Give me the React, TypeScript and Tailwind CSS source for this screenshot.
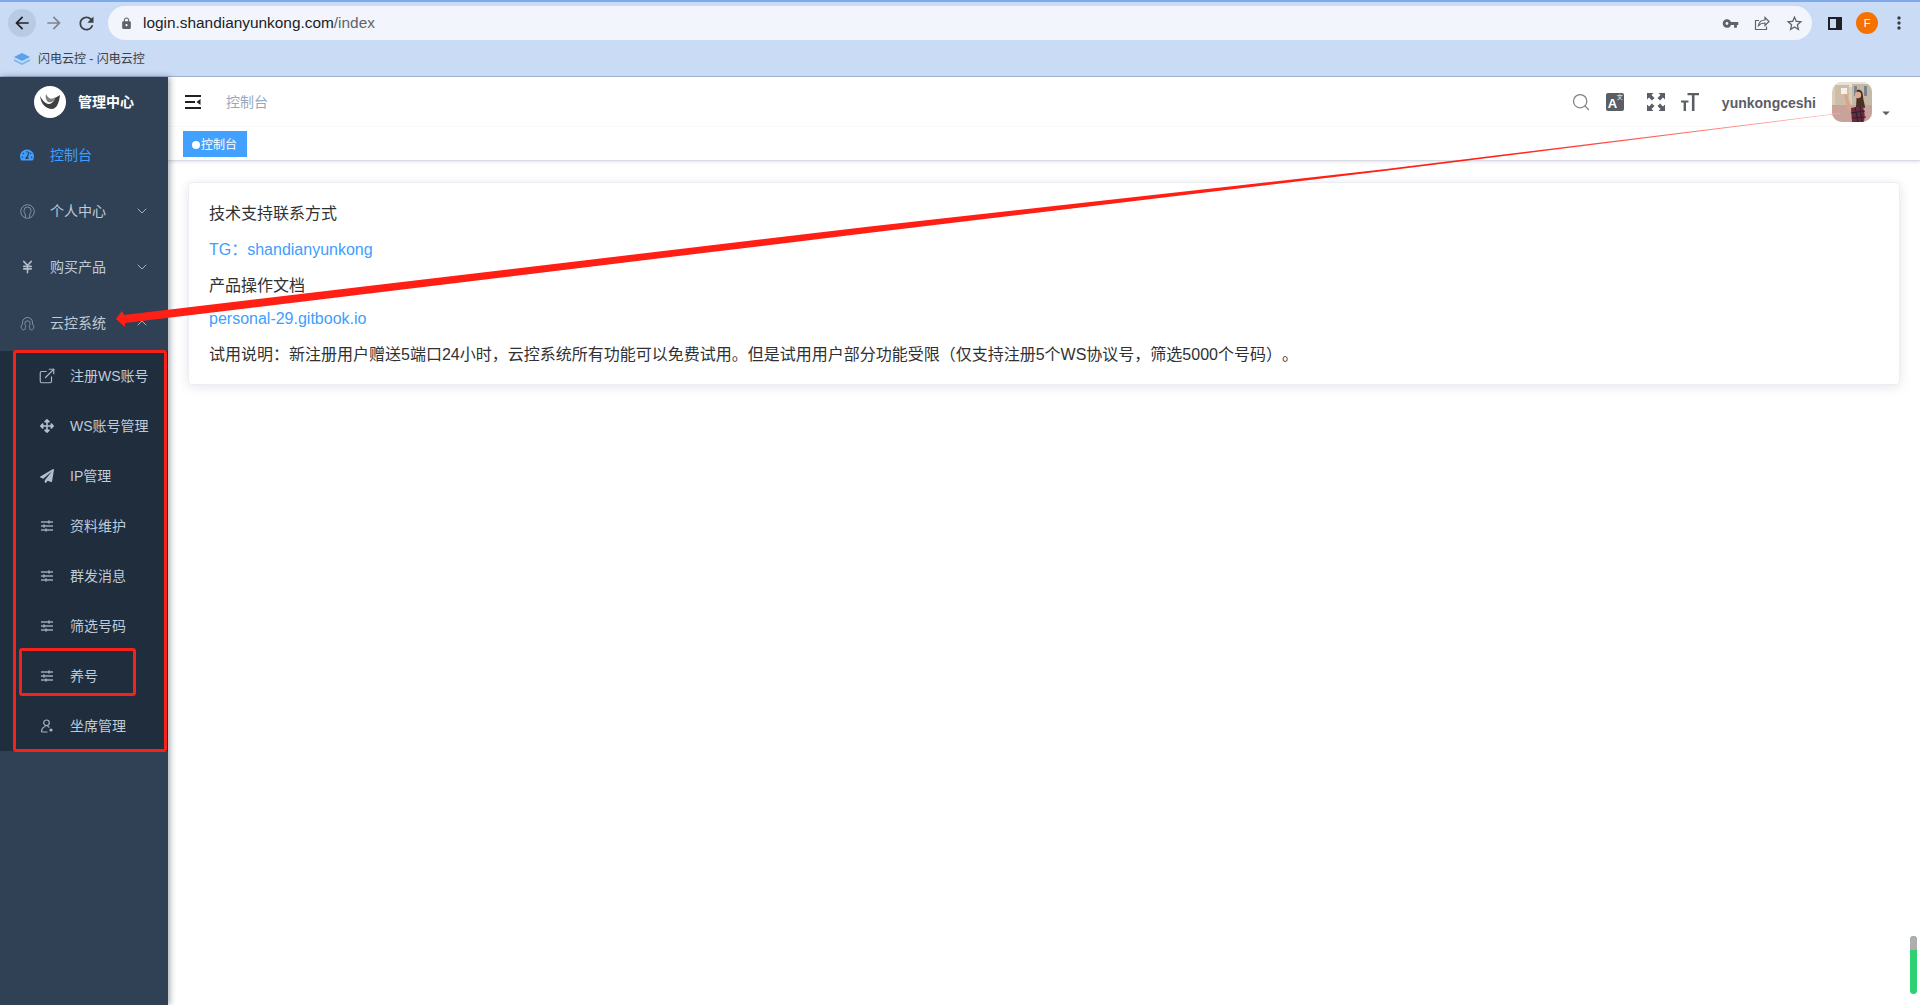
import React from "react";
import { ChevronDown, ChevronUp, ExternalLink, JapaneseYen, Search } from "lucide-react";
import { FaTachometerAlt, FaPaperPlane, FaArrowsAlt } from "react-icons/fa";
import { MdArrowBack, MdArrowForward, MdRefresh, MdLock, MdVpnKey, MdStarBorder, MdMoreVert, MdArrowDropDown } from "react-icons/md";

function Sliders() {
  return (
    <svg width="14" height="12" viewBox="0 0 14 12" fill="none" stroke="#9aa6b6" strokeWidth="1.300">
      <path d="M1 2h12M1 6h12M1 10h12" />
      <path d="M9 0.500v3M4 4.500v3M6 8.500v3" strokeWidth="1.800" />
    </svg>
  );
}

function PersonCircle() {
  return (
    <svg width="15" height="15" viewBox="0 0 15 15" fill="none" stroke="#8f9bab" strokeWidth="0.900">
      <circle cx="7.500" cy="7.500" r="6.800" />
      <path d="M5.300 13.500V10c-1-1-1.300-2-1.300-3.500a3.500 3.500 0 0 1 7 0c0 1.500-.3 2.500-1.300 3.500v3.500" />
    </svg>
  );
}

function Headset() {
  return (
    <svg width="15" height="15" viewBox="0 0 15 15" fill="none" stroke="#8f9bab" strokeWidth="0.900">
      <path d="M2.500 8.500V6.500a5 5 0 0 1 10 0v2" />
      <path d="M4.800 7.500a2.700 2.700 0 0 1 5.400 0c0 1-.5 1.800-1 2.300M4.800 7.500c0 1 .5 1.800 1 2.300" />
      <path d="M2.500 8.500C1 9 .8 11 1.500 12.500c.5 1 1.500 1.500 2.500 1.500M12.500 8.500c1.500.5 1.700 2.500 1 4-.5 1-1.500 1.500-2.500 1.500M5 14c0-2 .3-3 1-4M10 14c0-2-.3-3-1-4" />
    </svg>
  );
}

function SeatIcon() {
  return (
    <svg width="14" height="14" viewBox="0 0 14 14" fill="none" stroke="#aab4c2" strokeWidth="1.200">
      <circle cx="6.500" cy="3.800" r="2.800" />
      <path d="M1.500 13c0-3 1.500-5 4-5.500M7.500 7.500c.8.100 1.400.5 1.900 1M1.500 13h6" />
      <circle cx="11" cy="11" r="1.600" fill="#aab4c2" stroke="none" />
    </svg>
  );
}

function ShareBox() {
  return (
    <svg width="16" height="16" viewBox="0 0 16 16" fill="none" stroke="#5f6368" strokeWidth="1.200">
      <path d="M5 5.500H1.500v9h11v-3" />
      <path d="M4.500 10.500c.5-3.500 3-5.500 6.500-5.500V2.500l4 4-4 4V8c-3 0-5 .8-6.500 2.500z" />
    </svg>
  );
}

function Fullscreen() {
  return (
    <svg width="18" height="18" viewBox="0 0 18 18" fill="#5a5e66">
      <path d="M0 0h6.500L4.500 2 7.500 5 5 7.500 2 4.500 0 6.500zM18 0v6.500l-2-2-3 3L10.500 5l3-3-2-2zM0 18v-6.500l2 2 3-3L7.500 13l-3 3 2 2zM18 18h-6.500l2-2-3-3 2.500-2.500 3 3 2-2z" />
    </svg>
  );
}

function TextSize() {
  return (
    <svg width="18" height="18" viewBox="0 0 18 18" fill="#5a5e66">
      <path d="M6.500 0H18v2.200h-4.500V18h-2.600V2.200H6.500zM0 7.500h7.500v2H5V18H2.600V9.500H0z" />
    </svg>
  );
}

function Logo() {
  return (
    <div className="h-8 w-8 rounded-full bg-white">
      <svg width="32" height="32" viewBox="0 0 32 32">
        <path d="M6 10c1 8 6 13 12 13 4 0 7-5 8-14l-5 3c-1 4-4 6-7 6-3-1-6-4-8-8z" fill="#3f3f3f" />
        <path d="M12 8c2 4 5 6 8 4l2-1c-2 5-6 6-8 5-2-2-3-5-2-8z" fill="#808080" />
      </svg>
    </div>
  );
}

function Avatar() {
  return (
    <svg width="40" height="40" viewBox="0 0 40 40" className="rounded-[10px]">
      <rect width="40" height="40" fill="#d9cdb9" />
      <rect x="0" y="0" width="40" height="5" fill="#e8e2d6" />
      <rect x="3" y="3" width="14" height="21" fill="#cdbda6" />
      <rect x="20" y="2" width="20" height="22" fill="#c4b9a8" />
      <rect x="22" y="4" width="3" height="10" fill="#7d8489" />
      <rect x="32" y="4" width="3" height="10" fill="#7d8489" />
      <rect x="0" y="23" width="40" height="17" fill="#c9a29a" />
      <rect x="9" y="6" width="6" height="6" fill="#f1f1ee" />
      <path d="M12 12l3 0 5 15-4 2z" fill="#d8a48e" />
      <path d="M25 8c4-1 6 2 6 6 0 4 2 8 2 12l-9-1z" fill="#4a2f22" />
      <circle cx="26" cy="13" r="3.200" fill="#dcab92" />
      <path d="M19 26l11-2c3 4 3 10 2 16H20z" fill="#6e2a3c" />
      <path d="M23 25l3 15M28 24l2 16M19 31l14-2M20 36l14-1" stroke="#232636" strokeWidth="1.200" />
    </svg>
  );
}

function Browser() {
  return (
    <div className="h-[77px] shrink-0 border-b border-[#a4b3d0] bg-[#c9dbf5]">
      <div className="h-[2px] bg-[#7ea9ea]" />
      <div className="flex h-[42px] items-center pl-2 pr-[11px]">
        <div className="flex h-7 w-7 items-center justify-center rounded-full bg-[#b8cae4]">
          <MdArrowBack size={20} className="text-[#202124]" />
        </div>
        <MdArrowForward size={20} className="ml-[8px] text-[#80868b]" />
        <MdRefresh size={21} className="ml-[12px] text-[#3c4043]" />
        <div className="ml-[11px] flex h-[34px] flex-1 items-center rounded-full bg-[#f2f6fc] pl-[12px] pr-[7px]">
          <MdLock size={13} className="text-[#5f6368]" />
          <span className="ml-[10px] text-[15.400px] text-[#202124]">
            login.shandianyunkong.com<span className="text-[#5f6368]">/index</span>
          </span>
          <div className="ml-auto flex items-center gap-[15px] pr-[1px]">
            <MdVpnKey size={17} className="text-[#5f6368]" />
            <ShareBox />
            <MdStarBorder size={19} className="text-[#5f6368]" />
          </div>
        </div>
        <div className="ml-[16px] h-[13px] w-[14px] border-y-2 border-l-2 border-r-[6px] border-[#202124]" />
        <div className="ml-[14px] flex h-[22px] w-[22px] items-center justify-center rounded-full bg-[#f57200] text-[11px] text-white">F</div>
        <MdMoreVert size={20} className="ml-[11px] text-[#3c4043]" />
      </div>
      <div className="flex h-[29px] items-center pl-[14px]">
        <svg width="16" height="12" viewBox="0 0 16 12" fill="#5aa0ec">
          <path d="M8 0l8 4-8 4-8-4z" />
          <path d="M0 6l8 4 8-4v2l-8 4-8-4z" fill="#7db6f0" />
        </svg>
        <span className="ml-[8px] text-[12px] text-[#3c4043]">闪电云控 - 闪电云控</span>
      </div>
    </div>
  );
}

const topMenu = [
  { label: "个人中心", icon: <PersonCircle />, arrow: "down" },
  { label: "购买产品", icon: <JapaneseYen size={16} strokeWidth={2.500} className="text-[#b4bfcc]" />, arrow: "down" },
  { label: "云控系统", icon: <Headset />, arrow: "up" },
];

const subMenu = [
  { label: "注册WS账号", icon: <ExternalLink size={18} strokeWidth={1.600} className="shrink-0 text-[#aab4c2]" /> },
  { label: "WS账号管理", icon: <FaArrowsAlt size={14} className="text-[#b4bfcc]" /> },
  { label: "IP管理", icon: <FaPaperPlane size={14} className="text-[#b4bfcc]" /> },
  { label: "资料维护", icon: <Sliders /> },
  { label: "群发消息", icon: <Sliders /> },
  { label: "筛选号码", icon: <Sliders /> },
  { label: "养号", icon: <Sliders /> },
  { label: "坐席管理", icon: <SeatIcon /> },
];

function Sidebar() {
  return (
    <aside className="z-10 w-[168px] shrink-0 bg-[#304156] shadow-[2px_0_6px_rgba(0,21,41,0.35)]">
      <div className="flex h-[50px] items-center pl-[34px]">
        <Logo />
        <span className="ml-[12px] text-[14px] font-bold text-white">管理中心</span>
      </div>
      <div className="flex h-[56px] items-center pl-[20px] text-[14px] text-[#409eff]">
        <FaTachometerAlt size={14} />
        <span className="ml-[16px]">控制台</span>
      </div>
      {topMenu.map((item) => (
        <div key={item.label} className="flex h-[56px] items-center pl-[20px] text-[14px] text-[#bfcbd9]">
          <span className="flex w-[15px] justify-center">{item.icon}</span>
          <span className="ml-[15px]">{item.label}</span>
          {item.arrow === "down" ? (
            <ChevronDown size={16} strokeWidth={1.200} className="ml-auto mr-[18px] text-[#bfcbd9]" />
          ) : (
            <ChevronUp size={16} strokeWidth={1.200} className="ml-auto mr-[18px] text-[#bfcbd9]" />
          )}
        </div>
      ))}
      <div className="mt-[-28px] h-[28px]" />
      <div className="bg-[#1f2d3d]">
        {subMenu.map((item) => (
          <div key={item.label} className="flex h-[50px] items-center pl-[40px] text-[14px] text-[#bfcbd9]">
            <span className="flex w-[14px] justify-center">{item.icon}</span>
            <span className="ml-[16px]">{item.label}</span>
          </div>
        ))}
      </div>
    </aside>
  );
}

function Navbar() {
  return (
    <div className="flex h-[50px] items-center bg-white pl-[17px] pr-[25px] shadow-[0_1px_4px_rgba(0,21,41,0.08)]">
      <svg width="16" height="14" viewBox="0 0 16 14" fill="#202124">
        <path d="M0 0h16v2H0zM0 6h10v2H0zM0 12h16v2H0zM15.500 4v6L11.500 7z" />
      </svg>
      <span className="ml-[25px] text-[14px] text-[#97a8be]">控制台</span>
      <div className="ml-auto flex items-center">
        <Search size={20} strokeWidth={1.500} className="text-[#7f8185]" />
        <div className="relative ml-[15px] h-[18px] w-[18px] rounded-[2px] bg-[#5a5e66] text-white">
          <span className="absolute bottom-[-1px] left-[2px] text-[13px] font-bold leading-[16px]">A</span>
          <span className="absolute right-[1px] top-[0px] text-[6px] leading-[8px]">文</span>
        </div>
        <span className="ml-[23px]"><Fullscreen /></span>
        <span className="ml-[16px]"><TextSize /></span>
        <span className="ml-[23px] mt-[2px] text-[14px] font-bold text-[#5a5e66]">yunkongceshi</span>
        <div className="relative ml-[16px] h-10 w-10">
          <Avatar />
        </div>
        <MdArrowDropDown size={18} className="ml-[5px] mt-[22px] text-[#5a5e66]" />
      </div>
    </div>
  );
}

function TagsBar() {
  return (
    <div className="flex h-[34px] items-center border-b border-[#d8dce5] bg-white pl-[15px] pt-[1px] shadow-[0_1px_3px_rgba(0,0,0,0.12)]">
      <div className="flex h-[26px] w-[64px] items-center bg-[#42a0ff] pl-[9px] pt-[1px] text-[12px] text-white">
        <span className="h-2 w-2 rounded-full bg-white" />
        <span className="ml-[1px]">控制台</span>
      </div>
    </div>
  );
}

function InfoCard() {
  return (
    <div className="mx-[20px] mt-[21px] h-[203px] rounded-[4px] border border-[#ebeef5] bg-white p-[20px] text-[16px] leading-[21px] text-[#303133] shadow-[0_2px_12px_rgba(0,0,0,0.1)] [text-spacing-trim:space-all]">
      <p>技术支持联系方式</p>
      <p className="mt-[15px] text-[#409eff]">TG：shandianyunkong</p>
      <p className="mt-[15px]">产品操作文档</p>
      <p className="mt-[12px] text-[#409eff]">personal-29.gitbook.io</p>
      <p className="mt-[15px]">试用说明：新注册用户赠送5端口24小时，云控系统所有功能可以免费试用。但是试用用户部分功能受限（仅支持注册5个WS协议号，筛选5000个号码）。</p>
    </div>
  );
}

function Annotations() {
  return (
    <>
      <svg width="1920" height="1005" className="pointer-events-none absolute left-0 top-0 z-20">
        <defs>
          <linearGradient id="fade" gradientUnits="userSpaceOnUse" x1="1500" y1="0" x2="1840" y2="0">
            <stop offset="0" stopColor="#ff1f14" />
            <stop offset="1" stopColor="#ffb0b0" />
          </linearGradient>
        </defs>
        <polygon points="116,319 122,311 124,315 870,226.500 1384,169.300 1840,113 1840,113.600 1384,171 870,232.800 125,323 125,327" fill="url(#fade)" />
      </svg>
      <div className="pointer-events-none absolute left-[13px] top-[350px] z-20 h-[402px] w-[154px] rounded-[3px] border-[3px] border-[#f5211a]" />
      <div className="pointer-events-none absolute left-[19px] top-[648px] z-20 h-[48px] w-[117px] rounded-[3px] border-[3px] border-[#f5211a]" />
      <div className="pointer-events-none absolute left-[1910px] top-[936px] z-20 h-[58px] w-[7px] overflow-hidden rounded-full bg-[#2dd172]">
        <div className="h-[14px] bg-[#aeaeae]" />
      </div>
    </>
  );
}

export default function App() {
  return (
    <div className="relative flex h-screen w-full flex-col overflow-hidden bg-white font-['Liberation_Sans','Noto_Sans_CJK_SC',sans-serif]">
      <Browser />
      <div className="flex flex-1">
        <Sidebar />
        <main className="flex-1">
          <Navbar />
          <TagsBar />
          <InfoCard />
        </main>
      </div>
      <Annotations />
    </div>
  );
}
